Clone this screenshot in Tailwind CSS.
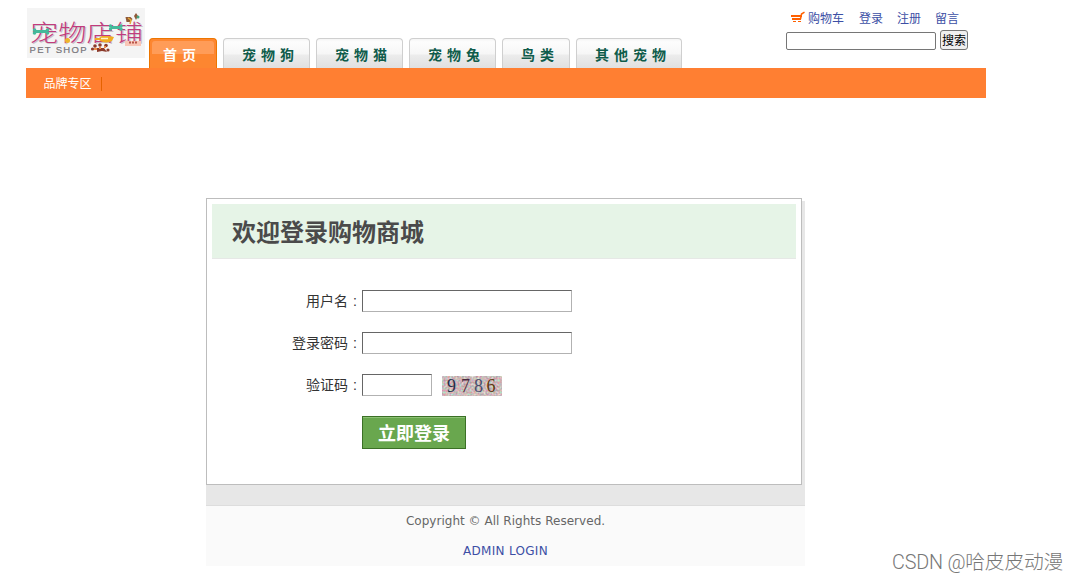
<!DOCTYPE html>
<html lang="zh-CN">
<head>
<meta charset="utf-8">
<title>宠物店铺</title>
<script src="https://cdn.jsdelivr.net/npm/@tailwindcss/browser@4"></script>
</head>
<body class="relative h-[581px] overflow-hidden bg-white text-[12px] font-['Liberation_Sans','Noto_Sans_CJK_SC',sans-serif]">
<header class="ml-[26px] w-[960px]">
  <div class="flex h-[68px] pt-2">
    <svg class="ml-px h-[50px] w-[118px] shrink-0" viewBox="0 0 118 50">
      <rect width="118" height="50" fill="#f4f4f4"/>
      <g transform="translate(3 33) scale(1.22 1)"><text class="[text-shadow:1px_1px_0_#c9c3c8]" font-family="'Noto Sans CJK SC',sans-serif" font-size="23.200" font-weight="300" fill="#c13b7d">宠物店铺</text></g>
      <path d="M8 23.500H20M84 19.500H93" stroke="#45b99a" stroke-width="3"/>
      <g fill="#45b99a"><circle cx="7.500" cy="22" r="1.800"/><circle cx="7.500" cy="25" r="1.800"/><circle cx="20.500" cy="22" r="1.800"/><circle cx="20.500" cy="25" r="1.800"/><circle cx="83.500" cy="18" r="1.700"/><circle cx="83.500" cy="21" r="1.700"/><circle cx="94" cy="18" r="1.700"/><circle cx="94" cy="21" r="1.700"/></g>
      <circle cx="40.500" cy="32.500" r="2.500" fill="#eeb52c"/>
      <path d="M68 30h4l3-2h7l5 1-2 4c-3 2-10 2-13-1h-4z" fill="#f0ac24"/><path d="M74 30.500h7" stroke="#fff3c8" stroke-width="1.500"/>
      <path d="M98.500 9h5l2 2-2 3h-4zM107 8l2-3 2 3-2 4z" fill="#8f5837"/><path d="M101 10l3 2-1 4" fill="none" stroke="#e5ac38" stroke-width="1.500"/><circle cx="111" cy="9" r="1.500" fill="#45a37d"/>
      <rect x="98" y="33" width="16" height="5" fill="#f9c6b7"/><path d="M102 34.500h8" stroke="#b75549" stroke-width="2" stroke-dasharray="2 1"/>
      <g fill="#8c3b2c"><circle cx="68" cy="38" r="1.800"/><circle cx="73" cy="37" r="1.800"/><circle cx="79" cy="37.500" r="1.800"/><circle cx="65.500" cy="41" r="1.600"/><circle cx="81" cy="42" r="1.600"/><path d="M70 40h7l3 4-5-1-5 1z"/></g><path d="M67 41h3m2-1h2m3-1h2" stroke="#ef914b" stroke-width="2"/>
      <text x="2.500" y="44.500" textLength="57" lengthAdjust="spacing" font-family="'Liberation Sans',sans-serif" font-size="9.500" fill="#77747a" stroke="#77747a" stroke-width=".2">PET SHOP</text>
    </svg>
    <nav class="ml-1 mt-[30px] flex h-[30px] gap-1.5 text-[14px] leading-[33px] font-bold tracking-[5px] whitespace-nowrap text-[#0f5c4b]">
      <a class="relative h-[30px] w-[68px] rounded-t border border-b-0 border-[#ed7600] bg-[#fd8630] pl-[13px] text-white"><span class="absolute top-[2px] right-[2px] left-[2px] h-[13px] rounded-t-[3px] bg-[#ff9c58]"></span><span class="relative">首页</span></a>
      <a class="w-[87px] rounded-t border border-b-0 border-[#cfcfcf] bg-[linear-gradient(#f5f5f5_0,#fdfdfd_3px,#f6f6f6_15px,#ececec_16px,#e0e0e0)] pl-[18px]">宠物狗</a>
      <a class="w-[87px] rounded-t border border-b-0 border-[#cfcfcf] bg-[linear-gradient(#f5f5f5_0,#fdfdfd_3px,#f6f6f6_15px,#ececec_16px,#e0e0e0)] pl-[18px]">宠物猫</a>
      <a class="w-[87px] rounded-t border border-b-0 border-[#cfcfcf] bg-[linear-gradient(#f5f5f5_0,#fdfdfd_3px,#f6f6f6_15px,#ececec_16px,#e0e0e0)] pl-[18px]">宠物兔</a>
      <a class="w-[68px] rounded-t border border-b-0 border-[#cfcfcf] bg-[linear-gradient(#f5f5f5_0,#fdfdfd_3px,#f6f6f6_15px,#ececec_16px,#e0e0e0)] pl-[18px]">鸟类</a>
      <a class="w-[106px] rounded-t border border-b-0 border-[#cfcfcf] bg-[linear-gradient(#f5f5f5_0,#fdfdfd_3px,#f6f6f6_15px,#ececec_16px,#e0e0e0)] pl-[18px]">其他宠物</a>
    </nav>
    <div class="mr-[18px] ml-auto w-[182px]">
      <div class="flex h-[22px] pl-[5px] leading-[23px] text-[#3c4fa5]">
        <svg class="mt-[3px] mr-[3px] h-3 w-[14px]" viewBox="0 0 14 12"><path d="M0 4h11v2H0zM1 7h9v2H1z" fill="#ff6000"/><path d="M9.500 8l1-5 3-1.800" fill="none" stroke="#ff6000" stroke-width="1.500"/><path d="M2 10h3v1H2zM7 10h3v1H7z" fill="#ff6000"/></svg>
        <a>购物车</a><a class="ml-[15px]">登录</a><a class="ml-[14px]">注册</a><a class="ml-[14px]">留言</a>
      </div>
      <div class="flex gap-1">
        <input class="mt-[2px] h-[18px] w-[150px] rounded-[2px] border border-[#767676] bg-white">
        <button class="h-5 w-7 rounded-[3px] border border-[#767676] bg-[#efefef] text-[12px] leading-[20px] whitespace-nowrap text-black">搜索</button>
      </div>
    </div>
  </div>
  <div class="flex h-[30px] bg-[#ff7f32] pl-[17.500px] text-white"><span class="leading-[32px]">品牌专区</span><span class="mt-[9px] ml-[9px] h-[14px] w-px bg-[#e56200]"></span></div>
</header>
<main class="mt-[100px] ml-[206px] w-[599px]">
  <div class="bg-[linear-gradient(#fff_0_3px,#e7e7e7_3px)] pb-5">
    <section class="h-[287px] w-[596px] border border-[#bdbdbd] bg-white p-[5px]">
      <h1 class="h-[55px] border-b border-[#e6e8e6] bg-[#e6f4e7] pl-5 text-[24px] leading-[57px] font-bold text-[#4a4a4a]">欢迎登录购物商城</h1>
      <form class="pt-[31px] text-[14px] text-[#333]">
        <div class="mb-5 flex h-[22px]"><label class="w-[150px] text-right leading-[22px]"><span>用户名</span><span class="inline-block w-[14px] text-center">:</span></label><input class="h-[22px] w-[210px] border border-t-[#666] border-r-[#b2b2b2] border-b-[#b2b2b2] border-l-[#666]"></div>
        <div class="mb-5 flex h-[22px]"><label class="w-[150px] text-right leading-[22px]"><span>登录密码</span><span class="inline-block w-[14px] text-center">:</span></label><input class="h-[22px] w-[210px] border border-t-[#666] border-r-[#b2b2b2] border-b-[#b2b2b2] border-l-[#666]"></div>
        <div class="mb-5 flex h-[22px]"><label class="w-[150px] text-right leading-[22px]"><span>验证码</span><span class="inline-block w-[14px] text-center">:</span></label><input class="h-[22px] w-[70px] border border-t-[#666] border-r-[#b2b2b2] border-b-[#b2b2b2] border-l-[#666]">
          <svg class="mt-[2px] ml-[10px] h-5 w-[60px]" viewBox="0 0 60 20"><defs><filter id="grain" x="0" y="0" width="1" height="1" color-interpolation-filters="sRGB"><feTurbulence type="fractalNoise" baseFrequency=".5" numOctaves="2" seed="4"/><feColorMatrix values=".5 0 0 0 .55  0 .6 0 0 .43  0 .3 .3 0 .43  0 0 0 0 1"/></filter></defs><rect width="60" height="20" fill="#cdbdbb"/><rect width="60" height="20" filter="url(#grain)"/><g font-family="'Liberation Serif',serif" font-size="18"><text x="5" y="16" fill="#2a2d48">9</text><text x="19" y="16" fill="#4b2940">7</text><text x="32" y="16" fill="#46516c">8</text><text x="44.500" y="16" fill="#5d3a14">6</text></g></svg>
        </div>
        <button type="button" class="ml-[150px] block h-[33px] w-[104px] border border-[#3b7026] bg-[#69a74e] text-[18px] leading-[35px] font-bold text-white shadow-[inset_0_1px_0_#8cc174]">立即登录</button>
      </form>
    </section>
  </div>
  <footer class="h-[61px] border-t border-[#dddddd] bg-[#fafafa] text-center font-['DejaVu_Sans',sans-serif] text-[12px] leading-[30px] text-[#666]">
    <p class="tracking-[0.030px]">Copyright © All Rights Reserved.</p>
    <p><a class="tracking-[0.300px] text-[#3c4fa5]">ADMIN LOGIN</a></p>
  </footer>
</main>
<div class="absolute top-[549px] left-[892px] font-['Roboto','Noto_Sans_CJK_SC',sans-serif] text-[19.800px] leading-[28px] font-light tracking-[-0.200px] whitespace-nowrap text-[#777]">CSDN @哈皮皮动漫</div>
</body>
</html>
